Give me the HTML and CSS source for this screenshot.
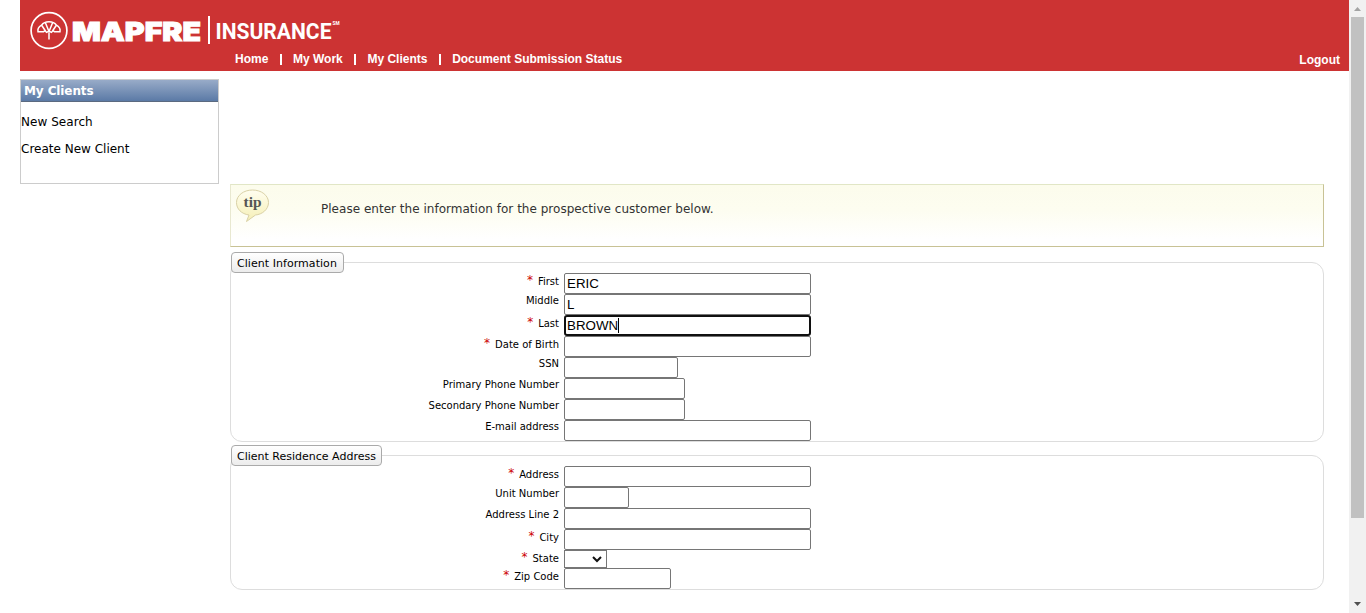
FILE: index.html
```html
<!DOCTYPE html>
<html lang="en">
<head>
<meta charset="utf-8">
<title>MAPFRE Insurance - Create New Client</title>
<link rel="stylesheet" href="styles.css">
</head>
<body>
<div class="page">
  <header class="header">
    <svg class="logo" width="330" height="48" viewBox="0 0 330 48" fill="#fff">
      <g fill="none" stroke="#fff">
        <circle cx="29" cy="30.500" r="17.900" stroke-width="1.700"/>
        <path d="M29 39.500V33M18 31.800Q17.200 27.500 21.500 25.200Q24 21.800 29 21.800Q34 21.800 36.500 25.200Q40.800 27.500 40 31.800H34.500Q33 30 31.500 32.300Q29 30.500 26.500 32.300Q25 30 23.500 31.800ZM21.800 25.500L25.500 31M25.500 23L29 31.500L32.500 23M36.200 25.500L32.500 31" stroke-width="1.500"/>
      </g>
      <text class="brand" x="52" y="41" textLength="129" lengthAdjust="spacingAndGlyphs">MAPFRE</text>
      <rect x="188" y="16" width="2" height="28"/>
      <text class="division" x="195.500" y="39" textLength="116" lengthAdjust="spacingAndGlyphs">INSURANCE</text>
      <text class="mark" x="312.500" y="25" textLength="7" lengthAdjust="spacingAndGlyphs">SM</text>
    </svg>
    <nav class="nav"><a>Home</a><i></i><a>My Work</a><i></i><a>My Clients</a><i></i><a>Document Submission Status</a><a class="logout">Logout</a></nav>
  </header>
  <div class="columns">
    <aside class="sidebar">
      <h2>My Clients</h2>
      <a class="search">New Search</a>
      <a class="create">Create New Client</a>
    </aside>
    <main class="content">
      <div class="tip">
        <svg class="bubble" width="36" height="34" viewBox="0 0 36 34">
          <defs><linearGradient id="b" x2="0" y2="1"><stop offset="0" stop-color="#fffef0"/><stop offset="1" stop-color="#f5efb5"/></linearGradient></defs>
          <path d="M17.500 1C26.500 1 33.500 6.500 33.500 13.500C33.500 20.500 27 25.500 20.500 26L11.500 32.500L14 26C6.500 25 1.500 20 1.500 13.500C1.500 6.500 8.500 1 17.500 1Z" fill="url(#b)" stroke="#d9d1a6"/>
          <text class="tip-word" x="8.500" y="18" textLength="18" lengthAdjust="spacingAndGlyphs">tip</text>
        </svg>
        <p>Please enter the information for the prospective customer below.</p>
      </div>
      <section class="group">
        <h3>Client Information</h3>
        <div class="rows">
          <div class="row"><label class="req"><b>*</b>First</label><input class="w-full" value="ERIC"></div>
          <div class="row"><label>Middle</label><input class="w-full" value="L"></div>
          <div class="row"><label class="req"><b>*</b>Last</label><div class="focused w-full">BROWN<span class="caret"></span></div></div>
          <div class="row"><label class="req"><b>*</b>Date of Birth</label><input class="w-full"></div>
          <div class="row"><label>SSN</label><input class="w-ssn"></div>
          <div class="row"><label>Primary Phone Number</label><input class="w-phone"></div>
          <div class="row"><label>Secondary Phone Number</label><input class="w-phone"></div>
          <div class="row"><label>E-mail address</label><input class="w-full"></div>
        </div>
      </section>
      <section class="group residence">
        <h3>Client Residence Address</h3>
        <div class="rows">
          <div class="row"><label class="req"><b>*</b>Address</label><input class="w-full"></div>
          <div class="row"><label>Unit Number</label><input class="w-unit"></div>
          <div class="row"><label>Address Line 2</label><input class="w-full"></div>
          <div class="row"><label class="req"><b>*</b>City</label><input class="w-full"></div>
          <div class="row state"><label class="req"><b>*</b>State</label><div class="select"><svg width="10" height="7" viewBox="0 0 10 7"><path d="M1 1L5 5L9 1" fill="none" stroke="#111" stroke-width="2"/></svg></div></div>
          <div class="row"><label class="req"><b>*</b>Zip Code</label><input class="w-zip"></div>
        </div>
      </section>
    </main>
  </div>
</div>
<div class="scrollbar">
  <svg width="7" height="4" viewBox="0 0 7 4"><path d="M0 4L3.500 0L7 4Z" fill="#a3a3a3"/></svg>
  <div class="thumb"></div>
  <svg class="down" width="7" height="4" viewBox="0 0 7 4"><path d="M0 0L3.500 4L7 0Z" fill="#505050"/></svg>
</div>
</body>
</html>
```
FILE: styles.css
```css
* { box-sizing: border-box; }
body { margin: 0; height: 613px; display: flex; overflow: hidden; background: #fff; color: #000; font: 12px/16px "DejaVu Sans", Verdana, sans-serif; }
h2, h3, p { margin: 0; }
.page { width: 1349px; padding-left: 20px; }
.header { height: 71px; background: #cc3333; color: #fff; }
.logo { display: block; height: 48px; overflow: visible; }
.brand { font: 900 26px Inter, sans-serif; stroke: #fff; stroke-width: 1px; }
.division { font: 700 22.500px Roboto, sans-serif; }
.mark { font: 700 5px Roboto, sans-serif; }
.nav { display: flex; align-items: center; height: 22px; padding: 0 9px 0 215px; font: bold 12px/22px "Liberation Sans", Arial, sans-serif; }
.nav i { width: 2px; height: 11px; margin: 0 11px 0 11.670px; background: #fff; }
.logout { margin: 2px 0 0 auto; }
.columns { display: flex; }
.sidebar { display: flex; flex-direction: column; width: 199px; height: 105px; margin-top: 8px; border: 1px solid #ccc; }
.sidebar h2 { height: 22px; padding-left: 3px; border-bottom: 1px solid #5b6a80; background: linear-gradient(#98abc8, #5b7aa6); color: #fff; font-size: 12px; line-height: 22px; letter-spacing: -0.1px; }
.search { margin-top: 12px; letter-spacing: 0.05px; }
.create { margin-top: 11px; }
.content { width: 1094px; margin: 113px 0 0 11px; }
.tip { display: flex; height: 63px; padding: 4px 0 0 4px; border: 1px solid #c8c295; border-top-color: #e1e6c6; border-left-color: #e8e8d0; background: linear-gradient(#fcfcec, #fdfdf0 40%, #fff 90%); color: #333; }
.tip-word { font: bold 15px "Liberation Serif", serif; fill: #555; }
.tip p { margin: 12px 0 0 50px; letter-spacing: 0.02px; }
.group { height: 180px; margin-top: 15px; border: 1px solid #ddd; border-radius: 12px; }
.residence { height: 135px; margin-top: 13px; }
.group h3 { width: 113px; height: 21px; margin-top: -11px; padding-left: 5px; border: 1px solid #aaa; border-radius: 4px; background: linear-gradient(#fff, #ececec); font-size: 11px; font-weight: 400; line-height: 21px; letter-spacing: 0.05px; white-space: nowrap; }
.residence h3 { width: 151px; letter-spacing: 0; }
.row { display: flex; height: 21px; }
.row label { display: flex; justify-content: flex-end; width: 328px; margin-right: 5px; font-size: 10px; line-height: 13px; }
.row .req { line-height: 17px; }
.row b { margin-right: 5px; color: #c00; font-size: 12px; font-weight: 400; line-height: 15px; }
.row input, .focused { height: 21px; margin: 0; padding: 1px 2px; border: 1px solid #767676; border-radius: 2px; background: #fff; color: #000; font: 13.333px/17px "Liberation Sans", Arial, sans-serif; outline: 0; }
.focused { display: flex; padding: 0 1px; border: 2px solid #101010; border-radius: 3px; }
.caret { width: 1px; height: 15px; margin-top: 1px; background: #000; }
.row .w-full { width: 247px; }
.w-ssn { width: 114px; }
.w-phone { width: 121px; }
.w-unit { width: 65px; }
.w-zip { width: 107px; }
.row.state { height: 18px; }
.select { display: flex; align-items: center; justify-content: flex-end; width: 43px; height: 18px; padding-right: 4px; border: 1px solid #767676; }
.scrollbar { display: flex; flex-direction: column; align-items: center; width: 17px; padding: 7px 0; background: #f1f1f1; }
.thumb { width: 13px; height: 501px; margin-top: 6px; background: #c1c1c1; }
.down { margin-top: auto; }
```
